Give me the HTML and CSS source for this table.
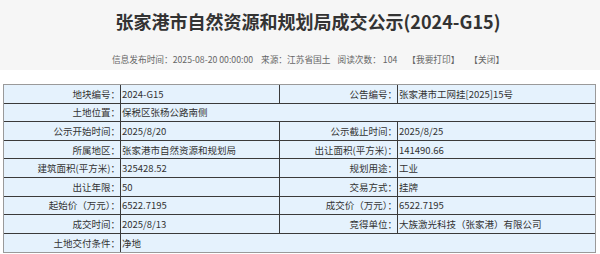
FILE: index.html
```html
<!DOCTYPE html>
<html lang="zh-CN">
<head>
<meta charset="utf-8">
<title>张家港市自然资源和规划局成交公示(2024-G15)</title>
<link rel="stylesheet" href="styles.css">
</head>
<body>
<header class="head">
  <h1 class="title">张家港市自然资源和规划局成交公示(2024-G15)</h1>
  <div class="meta">
    <span>信息发布时间：2025-08-20 00:00:00</span>
    <span class="m1">来源：江苏省国土</span>
    <span class="m2">阅读次数： 104</span>
    <span class="m3">【我要打印】</span>
    <span class="m4">【关闭】</span>
  </div>
</header>
<table class="info">
  <colgroup>
    <col class="c1"><col class="c2"><col class="c3"><col class="c4">
  </colgroup>
  <tr><td class="lab">地块编号：</td><td>2024-G15</td><td class="lab">公告编号：</td><td class="last">张家港市工网挂[2025]15号</td></tr>
  <tr><td class="lab">土地位置：</td><td colspan="3" class="last">保税区张杨公路南侧</td></tr>
  <tr><td class="lab">公示开始时间：</td><td>2025/8/20</td><td class="lab">公示截止时间：</td><td class="last">2025/8/25</td></tr>
  <tr><td class="lab">所属地区：</td><td>张家港市自然资源和规划局</td><td class="lab">出让面积(平方米)：</td><td class="last">141490.66</td></tr>
  <tr><td class="lab">建筑面积(平方米)：</td><td>325428.52</td><td class="lab">规划用途：</td><td class="last">工业</td></tr>
  <tr><td class="lab">出让年限：</td><td>50</td><td class="lab">交易方式：</td><td class="last">挂牌</td></tr>
  <tr><td class="lab">起始价（万元）：</td><td>6522.7195</td><td class="lab">成交价（万元）：</td><td class="last">6522.7195</td></tr>
  <tr><td class="lab">成交时间：</td><td>2025/8/13</td><td class="lab">竞得单位：</td><td class="last">大族激光科技（张家港）有限公司</td></tr>
  <tr class="lastrow"><td class="lab">土地交付条件：</td><td colspan="3" class="last">净地</td></tr>
</table>
</body>
</html>
```
FILE: styles.css
```css
html, body {
  margin: 0;
  padding: 0;
  background: #ffffff;
  font-family: "Noto Sans CJK SC", "Noto Sans", sans-serif;
  color: #333333;
}

.head {
  background: #f6f6f6;
  height: 70px;
  box-sizing: border-box;
  padding: 8px 0 0 16px;
  text-align: center;
}

.title {
  margin: 0;
  font-size: 18px;
  line-height: 26px;
  font-weight: bold;
  color: #333333;
}

.meta {
  margin-top: 19px;
  font-size: 8.7px;
  line-height: 14px;
  color: #666666;
  white-space: nowrap;
}

.m1 { margin-left: 6px; }
.m2 { margin-left: 5px; }
.m3 { margin-left: 8px; }
.m4 { margin-left: 8px; }

.info {
  margin: 14px 0 0 3px;
  width: 593px;
  table-layout: fixed;
  border-collapse: separate;
  border-spacing: 0;
  border: 1px solid #9a9a9a;
  background: #e5f2fd;
  font-size: 9.5px;
  color: #333333;
}

.c1 { width: 117px; }
.c2 { width: 159px; }
.c3 { width: 118px; }
.c4 { width: 197px; }

.info td {
  box-sizing: border-box;
  height: 18.6px;
  padding: 0 0 0 1px;
  border-right: 1px solid #3a3a3a;
  border-bottom: 1px solid #3a3a3a;
  white-space: nowrap;
  overflow: hidden;
  line-height: 12px;
  vertical-align: middle;
}

.info td.lab {
  text-align: right;
  padding: 0;
}

.info td.last {
  border-right: 0;
}

.info tr.lastrow td {
  border-bottom: 0;
}
```
